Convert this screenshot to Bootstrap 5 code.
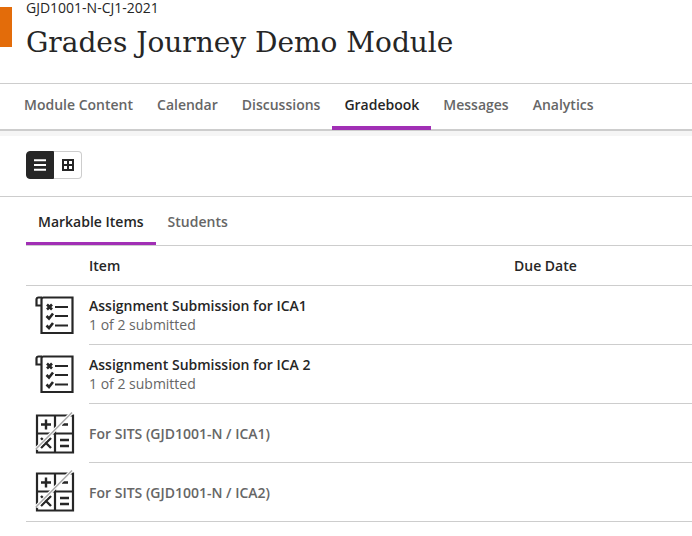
<!DOCTYPE html>
<html lang="en">
<head>
<meta charset="utf-8">
<title>Gradebook</title>
<link href="https://cdn.jsdelivr.net/npm/bootstrap@5.3.0/dist/css/bootstrap.min.css" rel="stylesheet">
<style>
html,body{height:536px;overflow:hidden}
body{font-family:"Open Sans",sans-serif;color:#262626;background:#fff;font-size:14px}
.top-head{height:83px;gap:14px}
.accent-block{width:12px;height:40px;margin-top:7px;background:#e36c0a;flex:none}
.mod-code{font-size:14px;line-height:16px}
.mod-title{font-family:"DejaVu Serif","Liberation Serif",serif;font-size:28px;line-height:38px;font-weight:400;margin:8px 0 0;color:#262626}
.main-tabs{height:48px;border-top:1px solid #cdcdcd;border-bottom:2px solid #cdcdcd;padding-left:12px}
.main-tab{height:46px;padding:0 12px;line-height:42px;font-weight:600;color:#666;text-decoration:none;white-space:nowrap;font-size:14px}
.main-tab.on{color:#262626;border-bottom:4px solid #a12fb5;margin-bottom:-1px}
.shade-band{height:5px;background:#f5f5f5}
.view-bar{height:61px;padding:15px 26px 0;border-bottom:1px solid #cdcdcd}
.view-btn{width:28px;height:28px;border:1px solid #cdcdcd;background:#fff}
.view-btn.on{background:#262626;border-color:#262626;border-radius:4px 0 0 4px}
.view-btn.off{border-left:0;border-radius:0 4px 4px 0}
.sub-tabs{height:49px;margin-left:26px;border-bottom:1px solid #cdcdcd}
.sub-tab{height:48px;padding:0 12px;line-height:50px;font-weight:600;color:#666;text-decoration:none;font-size:14px}
.sub-tab.on{color:#262626;border-bottom:3px solid #a12fb5}
.grade-wrap{margin-left:26px}
.head-row{height:40px;border-bottom:1px solid #cdcdcd;font-weight:600;line-height:40px;color:#262626}
.icon-cell{width:63px;flex:none}
.item-cell{width:425px;flex:none}
.due-cell{flex:1}
.entry{height:59px}
.entry-end{border-bottom:1px solid #cdcdcd}
.entry-icon{width:63px;flex:none;padding-left:9px}
.entry-icon svg{overflow:visible}
.entry-text{height:59px;border-bottom:1px solid #cdcdcd;flex:1}
.entry-end .entry-text{border-bottom:0;height:58px}
.entry-name{font-weight:600;line-height:19px;color:#262626}
.entry-sub{line-height:19px;color:#666}
.entry-muted{font-weight:600;color:#666;font-size:14px}
</style>
</head>
<body>
<div class="d-flex top-head">
  <div class="accent-block"></div>
  <div>
    <div class="mod-code">GJD1001-N-CJ1-2021</div>
    <h1 class="mod-title">Grades Journey Demo Module</h1>
  </div>
</div>
<nav class="d-flex main-tabs">
  <a class="main-tab" href="#">Module Content</a>
  <a class="main-tab" href="#">Calendar</a>
  <a class="main-tab" href="#">Discussions</a>
  <a class="main-tab on" href="#">Gradebook</a>
  <a class="main-tab" href="#">Messages</a>
  <a class="main-tab" href="#">Analytics</a>
</nav>
<div class="shade-band"></div>
<div class="view-bar d-flex">
  <button class="view-btn on d-flex align-items-center justify-content-center p-0" aria-label="List view">
    <svg width="14" height="12" viewBox="0 0 14 12"><path d="M1 1.200h12M1 6h12M1 10.800h12" stroke="#fff" stroke-width="2"/></svg>
  </button>
  <button class="view-btn off d-flex align-items-center justify-content-center p-0" aria-label="Grid view">
    <svg width="12" height="12" viewBox="0 0 12 12"><path fill="#262626" fill-rule="evenodd" d="M0 0h12v12H0zM2 2v3h3V2zm5 0v3h3V2zM2 7v3h3V7zm5 0v3h3V7z"/></svg>
  </button>
</div>
<div class="d-flex sub-tabs">
  <a class="sub-tab on" href="#">Markable Items</a>
  <a class="sub-tab" href="#">Students</a>
</div>
<div class="grade-wrap">
  <div class="d-flex head-row">
    <div class="icon-cell"></div>
    <div class="item-cell">Item</div>
    <div class="due-cell">Due Date</div>
  </div>
  <div class="d-flex entry">
    <div class="entry-icon d-flex align-items-center">
      <svg width="40" height="40" viewBox="0 1 40 40" fill="none" stroke="#262626" stroke-width="2.200"><path d="M7 2.500H3.500a2 2 0 0 0-2 2v6h5M6.500 10.500V4.500a2 2 0 0 1 2-2h29v35.500h-31V10.500"/><path d="M12 9.500l5 5m0-5l-5 5M11.500 21l2.500 2.500 4-5M11.500 30.500l2.500 2.500 4-5" stroke-width="2.600"/><path d="M20 12h13M20 21h13M20 30.500h13"/></svg>
    </div>
    <div class="entry-text d-flex flex-column justify-content-center">
      <div class="entry-name">Assignment Submission for ICA1</div>
      <div class="entry-sub">1 of 2 submitted</div>
    </div>
  </div>
  <div class="d-flex entry">
    <div class="entry-icon d-flex align-items-center">
      <svg width="40" height="40" viewBox="0 1 40 40" fill="none" stroke="#262626" stroke-width="2.200"><path d="M7 2.500H3.500a2 2 0 0 0-2 2v6h5M6.500 10.500V4.500a2 2 0 0 1 2-2h29v35.500h-31V10.500"/><path d="M12 9.500l5 5m0-5l-5 5M11.500 21l2.500 2.500 4-5M11.500 30.500l2.500 2.500 4-5" stroke-width="2.600"/><path d="M20 12h13M20 21h13M20 30.500h13"/></svg>
    </div>
    <div class="entry-text d-flex flex-column justify-content-center">
      <div class="entry-name">Assignment Submission for ICA 2</div>
      <div class="entry-sub">1 of 2 submitted</div>
    </div>
  </div>
  <div class="d-flex entry">
    <div class="entry-icon d-flex align-items-center">
      <svg width="40" height="40" viewBox="0 0 40 40" fill="none" stroke="#262626" stroke-width="2.200"><path d="M2 1.500h36v37H2zM2 19.500h36M20 1.500v37"/><path d="M6 10.500h10M11 5.500v10M27 10.500h6M6 24l10 10m0-10L6 34M25 26h9M25 32h9" stroke-width="2.400"/><path d="M1 35L37 -1.500" stroke="#fff" stroke-width="3.600"/><path d="M1 35L37 -1.500" stroke="#a8a8a8" stroke-width="1.500"/></svg>
    </div>
    <div class="entry-text d-flex align-items-center entry-muted">For SITS (GJD1001-N / ICA1)</div>
  </div>
  <div class="d-flex entry entry-end">
    <div class="entry-icon d-flex align-items-center">
      <svg width="40" height="40" viewBox="0 0 40 40" fill="none" stroke="#262626" stroke-width="2.200"><path d="M2 1.500h36v37H2zM2 19.500h36M20 1.500v37"/><path d="M6 10.500h10M11 5.500v10M27 10.500h6M6 24l10 10m0-10L6 34M25 26h9M25 32h9" stroke-width="2.400"/><path d="M1 35L37 -1.500" stroke="#fff" stroke-width="3.600"/><path d="M1 35L37 -1.500" stroke="#a8a8a8" stroke-width="1.500"/></svg>
    </div>
    <div class="entry-text d-flex align-items-center entry-muted">For SITS (GJD1001-N / ICA2)</div>
  </div>
</div>
</body>
</html>
